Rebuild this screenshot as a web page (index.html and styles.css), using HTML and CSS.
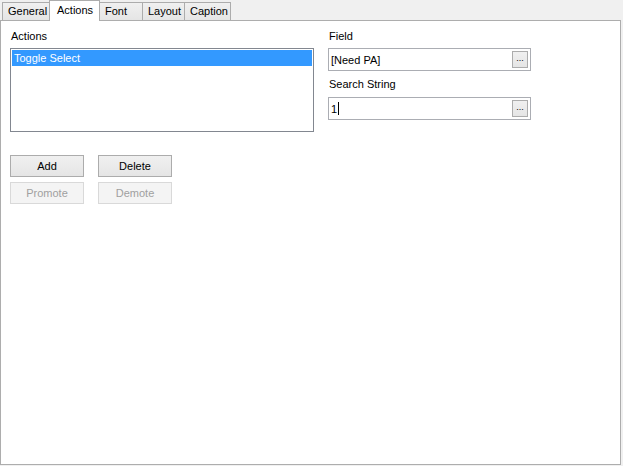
FILE: index.html
```html
<!DOCTYPE html>
<html lang="en">
<head>
    <meta charset="UTF-8">
    <title>Actions</title>
    <link rel="stylesheet" href="styles.css">
</head>
<body>

    <div class="tabs">
        <div class="tab tab-general">General</div>
        <div class="tab tab-actions active">Actions</div>
        <div class="tab tab-font">Font</div>
        <div class="tab tab-layout">Layout</div>
        <div class="tab tab-caption">Caption</div>
    </div>

    <div class="panel">
        <div class="columns">
            <div class="col-left">
                <div class="label">Actions</div>
                <div class="listbox">
                    <div class="list-item selected">Toggle Select</div>
                </div>

                <div class="buttons">
                    <button class="btn">Add</button>
                    <button class="btn">Delete</button>
                    <button class="btn" disabled>Promote</button>
                    <button class="btn" disabled>Demote</button>
                </div>
            </div>

            <div class="col-right">
                <div class="label">Field</div>
                <div class="field">
                    <span class="field-text">[Need PA]</span>
                    <span class="dots">...</span>
                </div>

                <div class="label second">Search String</div>
                <div class="field">
                    <span class="field-text">1<span class="caret"></span></span>
                    <span class="dots">...</span>
                </div>
            </div>
        </div>
    </div>

</body>
</html>
```

FILE: styles.css
```css
body {
    margin: 0;
    background: #f0f0f0;
    font-family: "Liberation Sans", Arial, sans-serif;
    font-size: 11px;
    color: #000;
    width: 623px;
    height: 466px;
}
.tabs {
    display: flex;
    align-items: flex-end;
    height: 20px;
    padding-left: 2px;
}
.tab {
    position: relative;
    box-sizing: border-box;
    height: 18px;
    line-height: 17px;
    padding-left: 5px;
    border: 1px solid #acacac;
    border-bottom: none;
    background: linear-gradient(#f0f0f0, #e5e5e5);
    margin-right: -1px;
}
.tab-general { width: 48px; }
.tab-actions { width: 51px; }
.tab-font { width: 44px; }
.tab-layout { width: 43px; }
.tab-caption { width: 47px; }
.tab.active {
    z-index: 1;
    height: 21px;
    line-height: 19px;
    padding-left: 7px;
    background: #fff;
    margin-bottom: -1px;
}
.panel {
    width: 619px;
    height: 443px;
    border: 1px solid #adadad;
    background: #fff;
}
.columns {
    display: flex;
    padding: 9px 0 0 9px;
}
.col-left {
    width: 304px;
}
.col-right {
    width: 203px;
    margin-left: 14px;
}
.label {
    height: 13px;
    line-height: 13px;
    margin-bottom: 5px;
    padding-left: 1px;
}
.label.second {
    margin-top: 7px;
    margin-bottom: 6px;
}
.listbox {
    height: 80px;
    border: 1px solid #828790;
    padding: 1px;
}
.list-item {
    height: 16px;
    line-height: 16px;
    padding-left: 2px;
}
.list-item.selected {
    background: #3399ff;
    color: #fff;
}
.buttons {
    display: grid;
    grid-template-columns: 74px 74px;
    column-gap: 14px;
    row-gap: 5px;
    margin-top: 23px;
}
.btn {
    height: 22px;
    font-family: inherit;
    font-size: 11px;
    color: #000;
    border: 1px solid #acacac;
    background: linear-gradient(#f0f0f0, #e5e5e5);
    padding: 0;
}
.btn:disabled {
    color: #a0a0a0;
    border-color: #d9d9d9;
    background: #f4f4f4;
}
.field {
    display: flex;
    align-items: center;
    justify-content: space-between;
    height: 21px;
    border: 1px solid #abadb3;
    padding: 0 2px 0 2px;
}
.field-text {
    display: flex;
    align-items: center;
}
.caret {
    display: inline-block;
    width: 1px;
    height: 13px;
    background: #000;
    margin-left: 1px;
}
.dots {
    width: 14px;
    height: 15px;
    line-height: 13px;
    text-align: center;
    border: 1px solid #acacac;
    background: linear-gradient(#f0f0f0, #e5e5e5);
    font-size: 9px;
}
```
